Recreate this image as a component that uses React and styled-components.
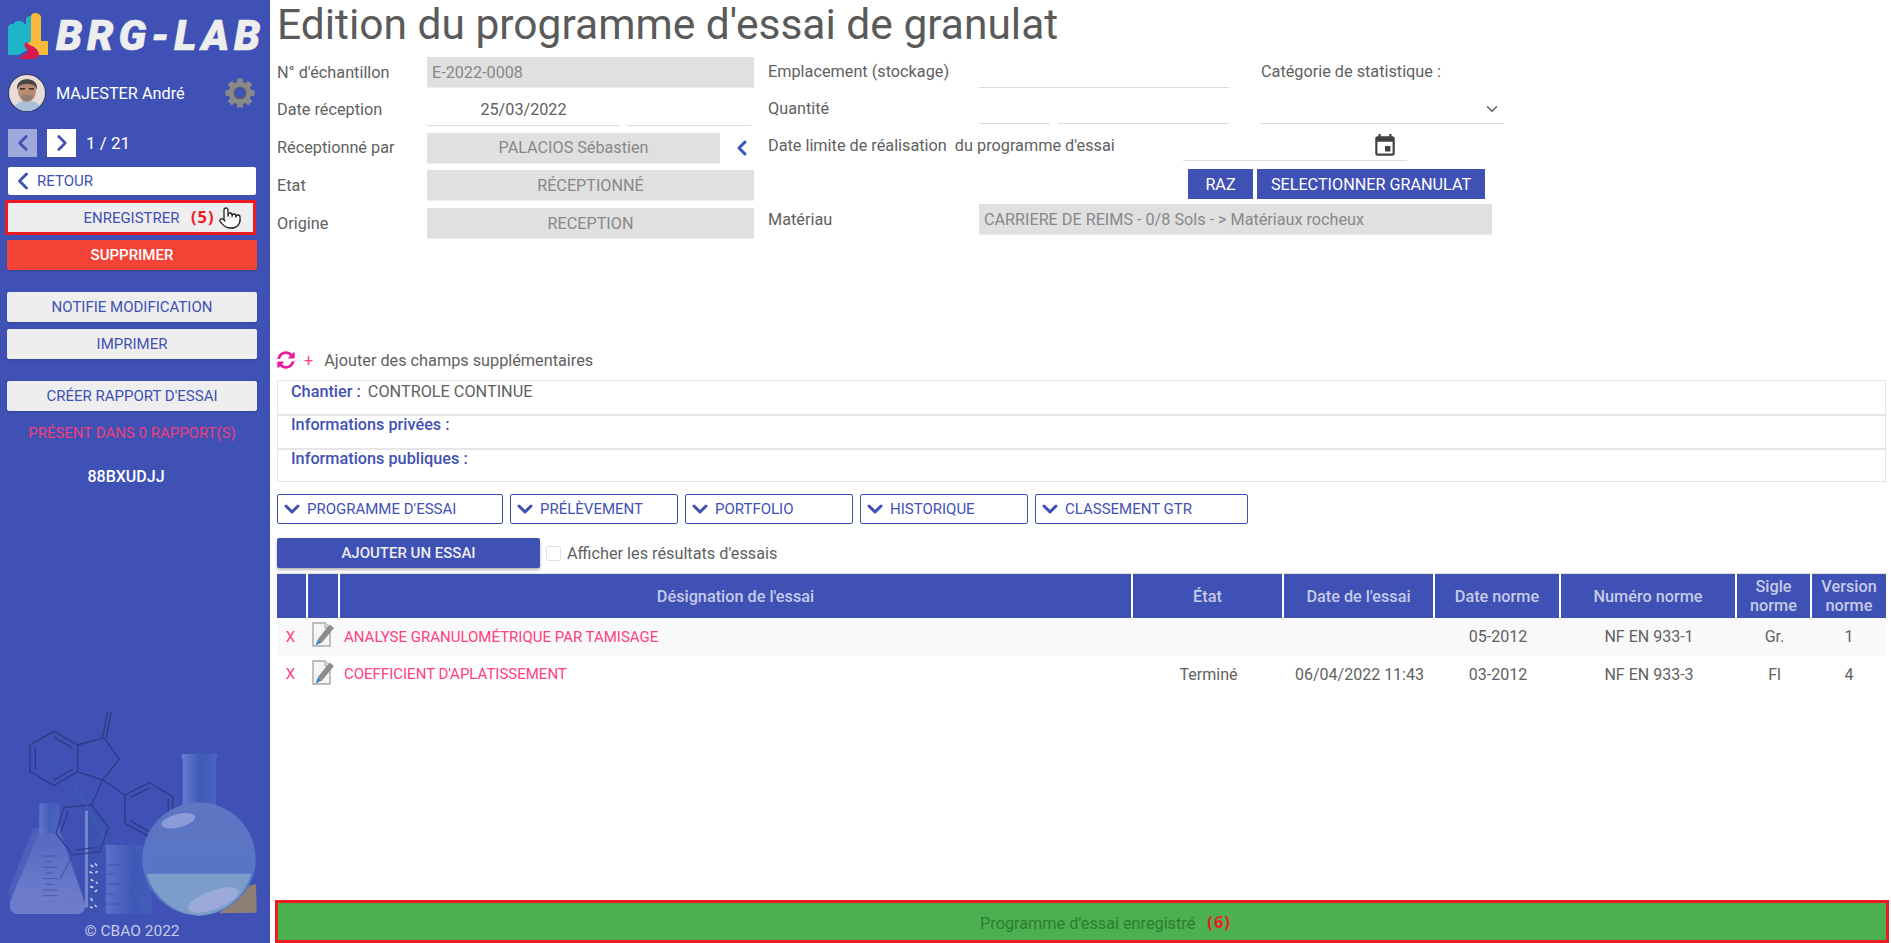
import React from 'react';
import styled, { createGlobalStyle } from 'styled-components';
import { ChevronLeft, ChevronRight, ChevronDown, Pointer } from 'lucide-react';
import { FaSyncAlt } from 'react-icons/fa';
import { MdEvent } from 'react-icons/md';

const PRIMARY = '#3f51b5';
const PINK = '#ff4081';

const GlobalStyle = createGlobalStyle`
  html, body { margin: 0; padding: 0; height: 100%; overflow: hidden; background: #fff; }
  body { font-family: Roboto, "Liberation Sans", sans-serif; font-size: 16.25px; color: #616161; }
  * { box-sizing: border-box; }
`;

const Page = styled.div`
  display: flex;
  width: 100%;
  height: 943px;
`;

const Sidebar = styled.aside`
  flex: 0 0 270px;
  width: 270px;
  min-width: 0;
  height: 100%;
  background: ${PRIMARY};
  display: flex;
  flex-direction: column;
  padding: 13px 13px 0 7px;
  color: #fff;
`;

const LogoRow = styled.div`
  display: flex;
  align-items: center;
  gap: 8px;
  height: 46px;
  padding-left: 1px;
`;

const LogoSvg = styled.svg`
  flex: none;
`;

const LogoText = styled.span`
  flex: none;
  width: 200px;
  font-weight: 900;
  font-style: italic;
  font-size: 42px;
  letter-spacing: 4.8px;
  line-height: 46px;
  color: #eeeeee;
  white-space: nowrap;
  -webkit-text-stroke: 0.6px #eeeeee;
`;

const UserRow = styled.div`
  display: flex;
  align-items: center;
  margin: 15px 0 0 1px;
  height: 38px;
`;

const UserName = styled.span`
  margin-left: 10px;
  font-size: 16.3px;
  flex: 1;
`;

const Pager = styled.div`
  display: flex;
  align-items: center;
  gap: 10px;
  margin: 17px 0 0 1px;
  height: 28px;
  font-size: 17px;
`;

const PagerButton = styled.button`
  width: 29px;
  height: 28px;
  padding: 0;
  border: 0;
  display: flex;
  align-items: center;
  justify-content: center;
  color: ${PRIMARY};
  background: ${(p) => (p.$off ? '#9fa8da' : '#fff')};
`;

const BackButton = styled.button`
  display: flex;
  align-items: center;
  width: 248px;
  height: 28px;
  margin: 10px 0 0 1px;
  padding: 0 0 0 1px;
  border: 0;
  border-radius: 2px;
  background: #fff;
  color: ${PRIMARY};
  font: 400 15px Roboto, sans-serif;
`;

const SaveFrame = styled.div`
  position: relative;
  display: flex;
  align-items: center;
  justify-content: center;
  width: 251px;
  height: 35px;
  margin: 5px 0 0 -2px;
  padding-left: 2px;
  border: 3px solid #ed1c24;
  background: #eeeeee;
  color: ${PRIMARY};
  font-size: 15px;
`;

const Mark = styled.b`
  font-family: "Open Sans", sans-serif;
  font-weight: 700;
  color: #ed1c24;
  font-size: 16.5px;
  letter-spacing: 1px;
`;

const SaveMark = styled(Mark)`
  position: absolute;
  left: 183px;
  top: 2px;
`;

const HandCursor = styled(Pointer)`
  position: absolute;
  right: 11px;
  top: 3px;
`;

const SideButton = styled.button`
  display: block;
  width: 250px;
  height: 30px;
  margin-top: ${(p) => p.$gap || 7}px;
  padding: 0;
  border: 0;
  border-radius: 2px;
  background: ${(p) => (p.$danger ? '#f44336' : '#eeeeee')};
  color: ${(p) => (p.$danger ? '#fff' : PRIMARY)};
  font: ${(p) => (p.$danger ? 500 : 400)} 15px Roboto, sans-serif;
  box-shadow: 0 1px 2px rgba(0, 0, 0, 0.2);
`;

const ReportCount = styled.div`
  margin-top: 13px;
  width: 250px;
  text-align: center;
  color: #ec407a;
  font-size: 15px;
  line-height: 18px;
`;

const Code = styled.div`
  margin-top: 26px;
  width: 238px;
  text-align: center;
  font-weight: 500;
  font-size: 16px;
  line-height: 18px;
`;

const Flasks = styled.svg`
  display: block;
  margin: auto -13px 0 -7px;
  width: 270px;
  height: 212px;
  flex: none;
`;

const Copyright = styled.div`
  width: 250px;
  height: 23px;
  text-align: center;
  color: #c5cae9;
  font-size: 15.5px;
  line-height: 23px;
`;

const Main = styled.main`
  flex: 1;
  min-width: 0;
  height: 100%;
  display: flex;
  flex-direction: column;
`;

const Content = styled.div`
  padding: 0 5px 0 7px;
`;

const Title = styled.h1`
  margin: 0;
  height: 57px;
  font-weight: 400;
  font-size: 42.5px;
  line-height: 49px;
  color: #5a5a5a;
  white-space: nowrap;
`;

const FormGrid = styled.div`
  display: flex;
  height: 182px;
`;

const LeftFields = styled.div`
  flex: 0 0 474px;
  display: flex;
  flex-direction: column;
  gap: 6.75px;
`;

const Field = styled.div`
  display: flex;
  align-items: center;
  height: 31px;
`;

const Label = styled.label`
  flex: 0 0 ${(p) => p.$w || 150}px;
  min-width: 0;
  margin-top: -1px;
  white-space: nowrap;
`;

const Input = styled.input`
  flex: ${(p) => (p.$w ? `0 0 ${p.$w}px` : '1')};
  width: ${(p) => (p.$w ? `${p.$w}px` : 'auto')};
  min-width: 0;
  height: 31px;
  margin-left: ${(p) => p.$left || 0}px;
  border: 0;
  border-bottom: 1px solid ${(p) => (p.disabled ? '#eeeeee' : '#dcdcdc')};
  background: ${(p) => (p.disabled ? '#e0e0e0' : 'transparent')};
  color: ${(p) => (p.disabled ? '#888' : '#616161')};
  font: 400 16.2px Roboto, sans-serif;
  text-align: ${(p) => p.$align || 'center'};
  padding: 0 5px;
  outline: 0;
  opacity: 1;
`;

const RightFields = styled.div`
  flex: 0 0 734px;
  margin-left: 14px;
  display: flex;
  flex-direction: column;
`;

const RightRow = styled.div`
  display: flex;
  align-items: center;
  height: ${(p) => p.$h}px;
  margin-top: ${(p) => p.$top || 0}px;
`;

const DateSlot = styled.div`
  position: relative;
  flex: 0 0 224px;
  height: 31px;
  border-bottom: 1px solid #dcdcdc;
`;

const CalendarIcon = styled(MdEvent)`
  position: absolute;
  right: 9px;
  top: 3px;
  font-size: 26px;
  color: #424242;
`;

const StatLabel = styled.div`
  flex: 0 0 243px;
  margin: -2px 0 0 32px;
  white-space: nowrap;
`;

const StatSlot = styled.div`
  position: relative;
  flex: 0 0 243px;
  height: 31px;
  margin-left: 32px;
`;

const StatSelect = styled.select`
  display: block;
  width: 100%;
  height: 100%;
  appearance: none;
  border: 0;
  border-bottom: 1px solid #dcdcdc;
  background: transparent;
  outline: 0;
`;

const StatArrow = styled(ChevronDown)`
  position: absolute;
  right: 3px;
  top: 7px;
  color: #616161;
  pointer-events: none;
`;

const BlueButton = styled.button`
  height: 30px;
  padding: 0;
  width: ${(p) => p.$w}px;
  margin-left: ${(p) => p.$left || 0}px;
  border: 0;
  background: ${PRIMARY};
  color: #fff;
  font: 400 16.2px Roboto, sans-serif;
  white-space: nowrap;
`;

const ExtraRow = styled.div`
  display: flex;
  align-items: center;
  height: 22px;
  margin-top: 110px;
`;

const Plus = styled.span`
  margin: 0 11px 0 9px;
  color: ${PINK};
`;

const InfoBox = styled.div`
  margin-top: 9px;
  border: 1px solid #e6e6e6;
`;

const InfoRow = styled.div`
  height: ${(p) => p.$h}px;
  padding: ${(p) => (p.$first ? 2 : 0)}px 0 0 13px;
  line-height: 18px;
  border-top: ${(p) => (p.$first ? '0' : '2px solid #e6e6e6')};
  white-space: nowrap;
`;

const InfoKey = styled.span`
  color: ${PRIMARY};
  font-weight: 500;
  margin-right: 3px;
`;

const Tabs = styled.div`
  display: flex;
  gap: 7px;
  margin-top: 12px;
`;

const Tab = styled.button`
  display: flex;
  align-items: center;
  width: ${(p) => p.$w}px;
  height: 30px;
  padding: 0 0 0 2px;
  gap: 3px;
  border: 1px solid ${PRIMARY};
  border-radius: 2px;
  background: #fff;
  color: ${PRIMARY};
  font: 400 15px Roboto, sans-serif;
`;

const ActionRow = styled.div`
  display: flex;
  align-items: center;
  margin-top: 14px;
  height: 30px;
`;

const AddButton = styled.button`
  width: 263px;
  height: 30px;
  border: 0;
  border-radius: 2px;
  background: ${PRIMARY};
  color: #eeeeee;
  font: 500 15px Roboto, sans-serif;
  box-shadow: 0 2px 3px rgba(0, 0, 0, 0.3);
`;

const CheckBox = styled.span`
  width: 15px;
  height: 15px;
  margin: 0 6px 0 6px;
  border: 1px solid #e0e0e0;
  border-radius: 2px;
`;

const Table = styled.table`
  width: 1609px;
  margin-top: 5px;
  table-layout: fixed;
  border-collapse: separate;
  border-spacing: 0;
`;

const Th = styled.th`
  height: 45px;
  padding: 0;
  border-top: 1px solid #e0e0e0;
  border-right: ${(p) => (p.$last ? '0' : '2px solid #fff')};
  background: ${PRIMARY};
  color: #c5cae9;
  font-weight: 500;
  font-size: 16.25px;
  line-height: 19px;
`;

const Tr = styled.tr`
  height: 37.5px;
  background: ${(p) => (p.$alt ? '#f9f9f9' : '#fff')};
`;

const Td = styled.td`
  padding: ${(p) => p.$pad || '0'};
  text-align: ${(p) => p.$align || 'center'};
  color: ${(p) => (p.$pink ? PINK : '#616161')};
  font-size: ${(p) => (p.$pink ? 15 : 16)}px;
  white-space: nowrap;
`;

const Toast = styled.div`
  margin: auto 2px 0 5px;
  height: 43px;
  padding: 4px 0 0 47px;
  border: 3px solid #ed1c24;
  background: #4caf50;
  display: flex;
  align-items: center;
  justify-content: center;
  gap: 12px;
  color: #2e7d32;
`;

const ToastMark = styled(Mark)`
  margin-top: -5px;
`;

function LogoMark() {
  return (
    <LogoSvg width="40" height="46" viewBox="0 0 40 46">
      <path d="M0 15 Q0 11 5 11 L6 11 Q6 8 11 8 Q16 8 16 11 L18 11 L18 7 Q18 3 23 3 Q27 3 28 7 L28 36 L22 28 Q18 32 22 36 L10 42 L0 42 Z" fill="#1fb5c9" />
      <path d="M23 28 L23 4 Q23 0 27 0 Q32 0 33 4 L33 28 L40 28 L40 42 L31 42 Q30 36 26 34 Q22 33 20 31 Q20 29 23 28 Z" fill="#fbb93c" />
      <path d="M11 46 Q13 42 18 41 Q21 38 17 34 Q15 31 19 29 Q20 32 24 33 Q30 36 31 42 L31 43 Q28 46 24 46 Z" fill="#d81b4f" />
    </LogoSvg>
  );
}

function Avatar() {
  return (
    <svg width="38" height="38" viewBox="0 0 38 38">
      <defs>
        <clipPath id="face"><circle cx="19" cy="19" r="18" /></clipPath>
      </defs>
      <circle cx="19" cy="19" r="19" fill="#2f3b66" />
      <g clipPath="url(#face)">
        <rect width="38" height="38" fill="#e9dcd6" />
        <path d="M4 38 Q6 29 15 27 L24 27 Q33 29 34 38 Z" fill="#a9c0dc" />
        <ellipse cx="19" cy="17" rx="9" ry="11" fill="#b98a72" />
        <path d="M9 16 Q8 6 19 5 Q30 6 29 16 Q27 9 19 10 Q11 9 9 16 Z" fill="#4a4543" />
        <path d="M13 22 Q19 19 25 22 Q23 27 19 27 Q15 27 13 22 Z" fill="#8f7d74" />
        <rect x="12" y="14" width="5" height="1.6" fill="#3a2f2b" />
        <rect x="21" y="14" width="5" height="1.6" fill="#3a2f2b" />
      </g>
    </svg>
  );
}

function Gear() {
  const teeth = [0, 45, 90, 135, 180, 225, 270, 315];
  return (
    <svg width="30" height="30" viewBox="0 0 30 30" style={{ marginRight: 2 }}>
      <circle cx="15" cy="15" r="8.5" fill="none" stroke="#8a8a8a" strokeWidth="5.5" />
      <circle cx="15" cy="15" r="6" fill="none" stroke="#5f5f6b" strokeWidth="1.2" />
      {teeth.map((a) => (
        <rect key={a} x="12" y="0.5" width="6" height="5" rx="1" fill="#8a8a8a" transform={`rotate(${a} 15 15)`} />
      ))}
    </svg>
  );
}

function FlaskArt() {
  return (
    <Flasks viewBox="0 54 810 636">
      <defs>
        <linearGradient id="glass" x1="0" y1="0" x2="1" y2="0">
          <stop offset="0" stopColor="#6f86d6" />
          <stop offset="0.5" stopColor="#3f5cb8" />
          <stop offset="1" stopColor="#4c68c0" />
        </linearGradient>
        <linearGradient id="bulb" x1="0" y1="0" x2="0" y2="1">
          <stop offset="0" stopColor="#6178c4" />
          <stop offset="1" stopColor="#5478c4" />
        </linearGradient>
        <linearGradient id="erl" x1="0" y1="0" x2="0" y2="1">
          <stop offset="0" stopColor="#4a5fbd" />
          <stop offset="1" stopColor="#8390d6" />
        </linearGradient>
      </defs>
      {/* molecule */}
      <g fill="none" stroke="#2d3a85" strokeWidth="4">
        <path d="M162 124 L233 165 L233 245 L162 287 L90 245 L90 165 Z" />
        <path d="M106 172 V238 M162 142 L218 174 M162 270 L218 238" />
        <path d="M233 165 L312 143 L358 208 L308 270 L233 245" />
        <path d="M308 143 L322 68 M318 143 L333 68" />
        <path d="M308 270 L375 315 M308 270 L275 345" />
        <path d="M375 315 L448 278 L518 320 L518 400 L448 440 L375 400 Z" />
        <path d="M390 322 L448 294 M505 328 V392 M390 392 L445 424" />
      </g>
      {/* erlenmeyer */}
      <path d="M100 415 L180 415 L250 620 L60 640 L22 610 Z" fill="#6677c8" opacity="0.35" />
      <path d="M118 340 H178 V425 L255 640 Q258 672 230 672 H55 Q25 672 30 635 L118 425 Z" fill="url(#erl)" opacity="0.7" />
      <rect x="118" y="340" width="60" height="90" fill="url(#glass)" opacity="0.55" />
      <path d="M128 498 H172 M136 515 H160 M128 532 H172 M136 549 H160 M128 566 H172 M136 583 H160 M128 600 H172 M128 617 H172" stroke="#3b4a9c" strokeWidth="2" />
      {/* tube */}
      <rect x="255" y="362" width="44" height="310" rx="18" fill="#3a52ac" opacity="0.7" />
      <rect x="255" y="362" width="9" height="290" fill="#8b9bdc" opacity="0.7" />
      <path d="M272 525 l8 6 M285 520 l6 8 M268 545 l10 4 M286 548 l7 -4 M272 568 l8 5 M288 575 l5 6 M270 590 l10 2 M284 605 l8 -4 M272 625 l6 8 M284 645 l6 6 M270 650 l8 4" stroke="#c3cdef" strokeWidth="5" />
      {/* beaker */}
      <path d="M315 465 H482 L455 482 V672 H318 V482 Z" fill="url(#glass)" opacity="0.6" />
      <path d="M322 525 H360 M322 582 H360 M322 642 H360 M322 552 H345 M322 612 H345" stroke="#3b4a9c" strokeWidth="2" />
      {/* bottom ring of the molecule stays visible through the glass */}
      <g fill="none" stroke="#2d3a85" strokeWidth="4" opacity="0.85">
        <path d="M275 345 L192 352 L168 430 L218 495 L300 485 L325 412 Z" />
        <path d="M205 362 L182 428 M225 480 L292 472" />
        <path d="M218 495 L180 568" opacity="0.5" />
      </g>
      {/* stand */}
      <path d="M658 670 L735 592 L768 582 L770 668 Z" fill="#8e8073" />
      {/* round flask */}
      <path d="M545 192 H652 V206 H648 V360 H548 V206 H545 Z" fill="url(#glass)" opacity="0.85" />
      <circle cx="597" cy="507" r="170" fill="url(#bulb)" opacity="0.92" />
      <path d="M440 551 H754 A170 170 0 0 1 597 677 A170 170 0 0 1 440 551 Z" fill="#7c9ccb" />
      <ellipse cx="640" cy="630" rx="80" ry="28" fill="#a4aede" opacity="0.8" transform="rotate(-20 640 630)" />
      <ellipse cx="535" cy="392" rx="52" ry="20" fill="#8a9bd8" transform="rotate(-14 535 392)" />
      {/* thin line over everything */}
      <path d="M185 218 L445 670" stroke="#3f7f9f" strokeWidth="2" opacity="0.7" />
    </Flasks>
  );
}

function EditIcon() {
  return (
    <svg width="22" height="25" viewBox="0 0 22 25">
      <path d="M1 1 H13 L18 6 V24 H1 Z" fill="#f5f5f5" stroke="#a8a8a8" strokeWidth="1.4" />
      <path d="M13 1 V6 H18" fill="#e0e0e0" stroke="#a8a8a8" strokeWidth="1" />
      <path d="M17.5 2.5 L22 6 L10 20.5 L6 17 Z" fill="#8d8d8d" />
      <path d="M6 17 L10 20.5 L3.5 23.5 Z" fill="#3f86c6" />
    </svg>
  );
}

const tests = [
  { name: 'ANALYSE GRANULOMÉTRIQUE PAR TAMISAGE', state: '', date: '', normDate: '05-2012', norm: 'NF EN 933-1', sigle: 'Gr.', version: '1' },
  { name: "COEFFICIENT D'APLATISSEMENT", state: 'Terminé', date: '06/04/2022 11:43', normDate: '03-2012', norm: 'NF EN 933-3', sigle: 'Fl', version: '4' },
];

const tabs = [
  { label: "PROGRAMME D'ESSAI", w: 226 },
  { label: 'PRÉLÈVEMENT', w: 168 },
  { label: 'PORTFOLIO', w: 168 },
  { label: 'HISTORIQUE', w: 168 },
  { label: 'CLASSEMENT GTR', w: 213 },
];

const widths = [31, 32, 793, 151, 151, 126, 176, 75, 74];

export default function App() {
  return (
    <Page>
      <GlobalStyle />
      <Sidebar>
        <LogoRow>
          <LogoMark />
          <LogoText>BRG-LAB</LogoText>
        </LogoRow>
        <UserRow>
          <Avatar />
          <UserName>MAJESTER André</UserName>
          <Gear />
        </UserRow>
        <Pager>
          <PagerButton $off><ChevronLeft size={26} strokeWidth={2.5} /></PagerButton>
          <PagerButton><ChevronRight size={26} strokeWidth={2.5} /></PagerButton>
          <span>1 / 21</span>
        </Pager>
        <BackButton><ChevronLeft size={28} strokeWidth={2.5} />RETOUR</BackButton>
        <SaveFrame>
          ENREGISTRER
          <SaveMark>(5)</SaveMark>
          <HandCursor size={24} fill="#fff" color="#222" strokeWidth={1.3} />
        </SaveFrame>
        <SideButton $danger $gap={5}>SUPPRIMER</SideButton>
        <SideButton $gap={22}>NOTIFIE MODIFICATION</SideButton>
        <SideButton>IMPRIMER</SideButton>
        <SideButton $gap={22}>CRÉER RAPPORT D'ESSAI</SideButton>
        <ReportCount>PRÉSENT DANS 0 RAPPORT(S)</ReportCount>
        <Code>88BXUDJJ</Code>
        <FlaskArt />
        <Copyright>© CBAO 2022</Copyright>
      </Sidebar>
      <Main>
        <Content>
          <Title>Edition du programme d'essai de granulat</Title>
          <FormGrid>
            <LeftFields>
              <Field>
                <Label>N° d'échantillon</Label>
                <Input disabled value="E-2022-0008" $align="left" readOnly />
              </Field>
              <Field>
                <Label>Date réception</Label>
                <Input value="25/03/2022" $w={193} readOnly />
                <Input value="" $w={124} $left={7} readOnly />
              </Field>
              <Field>
                <Label>Réceptionné par</Label>
                <Input disabled value="PALACIOS Sébastien" $w={293} readOnly />
                <ChevronLeft size={24} color={PRIMARY} strokeWidth={3} style={{ marginLeft: 10 }} />
              </Field>
              <Field>
                <Label>Etat</Label>
                <Input disabled value="RÉCEPTIONNÉ" readOnly />
              </Field>
              <Field>
                <Label>Origine</Label>
                <Input disabled value="RECEPTION" readOnly />
              </Field>
            </LeftFields>
            <RightFields>
              <RightRow $h={30}>
                <Label $w={211}>Emplacement (stockage)</Label>
                <Input $w={250} value="" readOnly />
                <StatLabel>Catégorie de statistique :</StatLabel>
              </RightRow>
              <RightRow $h={31} $top={6}>
                <Label $w={211}>Quantité</Label>
                <Input $w={71} value="" readOnly style={{ height: 30 }} />
                <Input $w={171} $left={8} value="" readOnly style={{ height: 30 }} />
                <StatSlot>
                  <StatSelect aria-label="Catégorie de statistique" />
                  <StatArrow size={18} />
                </StatSlot>
              </RightRow>
              <RightRow $h={31} $top={6}>
                <Label $w={415}>Date limite de réalisation&nbsp; du programme d'essai</Label>
                <DateSlot><CalendarIcon /></DateSlot>
              </RightRow>
              <RightRow $h={30} $top={8}>
                <BlueButton $w={65} $left={420}>RAZ</BlueButton>
                <BlueButton $w={228} $left={4}>SELECTIONNER GRANULAT</BlueButton>
              </RightRow>
              <RightRow $h={31} $top={5}>
                <Label $w={211}>Matériau</Label>
                <Input disabled $w={513} $align="left" value="CARRIERE DE REIMS - 0/8 Sols - > Matériaux rocheux" readOnly />
              </RightRow>
            </RightFields>
          </FormGrid>
          <ExtraRow>
            <FaSyncAlt color="#e91e9c" size={18} />
            <Plus>+</Plus>
            Ajouter des champs supplémentaires
          </ExtraRow>
          <InfoBox>
            <InfoRow $first $h={33}><InfoKey>Chantier :</InfoKey> CONTROLE CONTINUE</InfoRow>
            <InfoRow $h={34}><InfoKey>Informations privées :</InfoKey></InfoRow>
            <InfoRow $h={33}><InfoKey>Informations publiques :</InfoKey></InfoRow>
          </InfoBox>
          <Tabs>
            {tabs.map((tab) => (
              <Tab key={tab.label} $w={tab.w}>
                <ChevronDown size={24} strokeWidth={3} />
                {tab.label}
              </Tab>
            ))}
          </Tabs>
          <ActionRow>
            <AddButton>AJOUTER UN ESSAI</AddButton>
            <CheckBox />
            Afficher les résultats d'essais
          </ActionRow>
          <Table>
            <colgroup>
              {widths.map((w, i) => <col key={i} style={{ width: w }} />)}
            </colgroup>
            <thead>
              <tr>
                <Th /><Th />
                <Th>Désignation de l'essai</Th>
                <Th>État</Th>
                <Th>Date de l'essai</Th>
                <Th>Date norme</Th>
                <Th>Numéro norme</Th>
                <Th>Sigle<br />norme</Th>
                <Th $last>Version<br />norme</Th>
              </tr>
            </thead>
            <tbody>
              {tests.map((t, i) => (
                <Tr key={t.name} $alt={i === 0}>
                  <Td $pink $pad="0 4px 0 0">X</Td>
                  <Td $pad="0 2px 0 0"><EditIcon /></Td>
                  <Td $pink $align="left" $pad="0 0 0 4px">{t.name}</Td>
                  <Td>{t.state}</Td>
                  <Td>{t.date}</Td>
                  <Td>{t.normDate}</Td>
                  <Td>{t.norm}</Td>
                  <Td>{t.sigle}</Td>
                  <Td>{t.version}</Td>
                </Tr>
              ))}
            </tbody>
          </Table>
        </Content>
        <Toast>
          Programme d'essai enregistré <ToastMark>(6)</ToastMark>
        </Toast>
      </Main>
    </Page>
  );
}
